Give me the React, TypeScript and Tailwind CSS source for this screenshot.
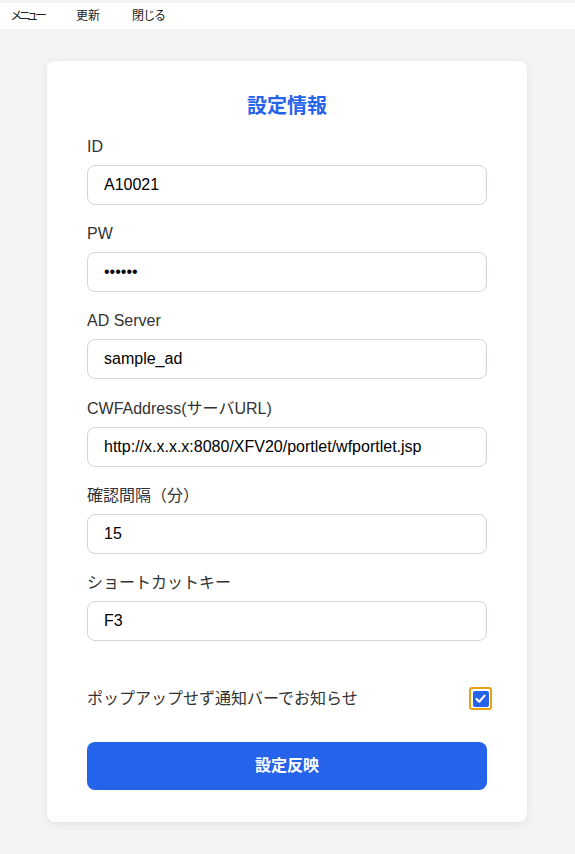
import { useState } from "react"

const fields = [
  { label: "ID", value: "A10021", type: "text" },
  { label: "PW", value: "123456", type: "password" },
  { label: "AD Server", value: "sample_ad", type: "text" },
  { label: "CWFAddress(サーバURL)", value: "http://x.x.x.x:8080/XFV20/portlet/wfportlet.jsp", type: "text" },
  { label: "確認間隔（分）", value: "15", type: "text" },
  { label: "ショートカットキー", value: "F3", type: "text" },
]

export default function App() {
  const [checked, setChecked] = useState(true)

  return (
    <div
      className="min-h-[854px] bg-[#f3f4f6] pt-[3px] text-[#333]"
      style={{ fontFamily: '"Liberation Sans", "Noto Sans CJK JP", sans-serif' }}
    >
      <div className="flex h-[26px] items-center bg-white pl-[11px] text-[12px] text-[#222] [font-feature-settings:'palt']">
        <span className="w-[65px] tracking-[-2.5px]">メニュー</span>
        <span className="w-[56px]">更新</span>
        <span>閉じる</span>
      </div>

      <div className="ml-[47px] mt-[32px] w-[480px] rounded-lg bg-white px-10 pb-8 pt-[31px] shadow-[0_2px_8px_rgba(0,0,0,0.08)]">
        <h1 className="mb-[15px] text-center text-xl font-bold leading-7 text-[#2563eb]">設定情報</h1>

        <div className="flex flex-col gap-[17.2px]">
          {fields.map((f) => (
            <div key={f.label}>
              <label className="mb-[6px] block text-base leading-6 text-[#333]">{f.label}</label>
              <input
                type={f.type}
                defaultValue={f.value}
                className="h-10 w-full rounded-lg border border-[#d1d5db] bg-white px-4 text-base text-black outline-none"
              />
            </div>
          ))}
        </div>

        <div className="mt-[46px] flex items-center justify-between">
          <span className="text-base leading-6 text-[#333]">ポップアップせず通知バーでお知らせ</span>
          <button
            onClick={() => setChecked(!checked)}
            className="mr-[-5px] flex h-[23px] w-[23px] items-center justify-center rounded-[3px] border-2 border-[#e8a010]"
          >
            <span className="flex h-[16px] w-[16px] items-center justify-center rounded-[2px] bg-[#2563eb]">
              {checked && (
                <svg viewBox="0 0 16 16" className="h-[13px] w-[13px]">
                  <path d="M3 8.5 L6.5 12 L13 4.5" fill="none" stroke="white" strokeWidth="2.6" strokeLinecap="round" strokeLinejoin="round" />
                </svg>
              )}
            </span>
          </button>
        </div>

        <button className="mt-[31px] h-12 w-full rounded-lg bg-[#2563eb] text-base font-bold text-white">設定反映</button>
      </div>
    </div>
  )
}
